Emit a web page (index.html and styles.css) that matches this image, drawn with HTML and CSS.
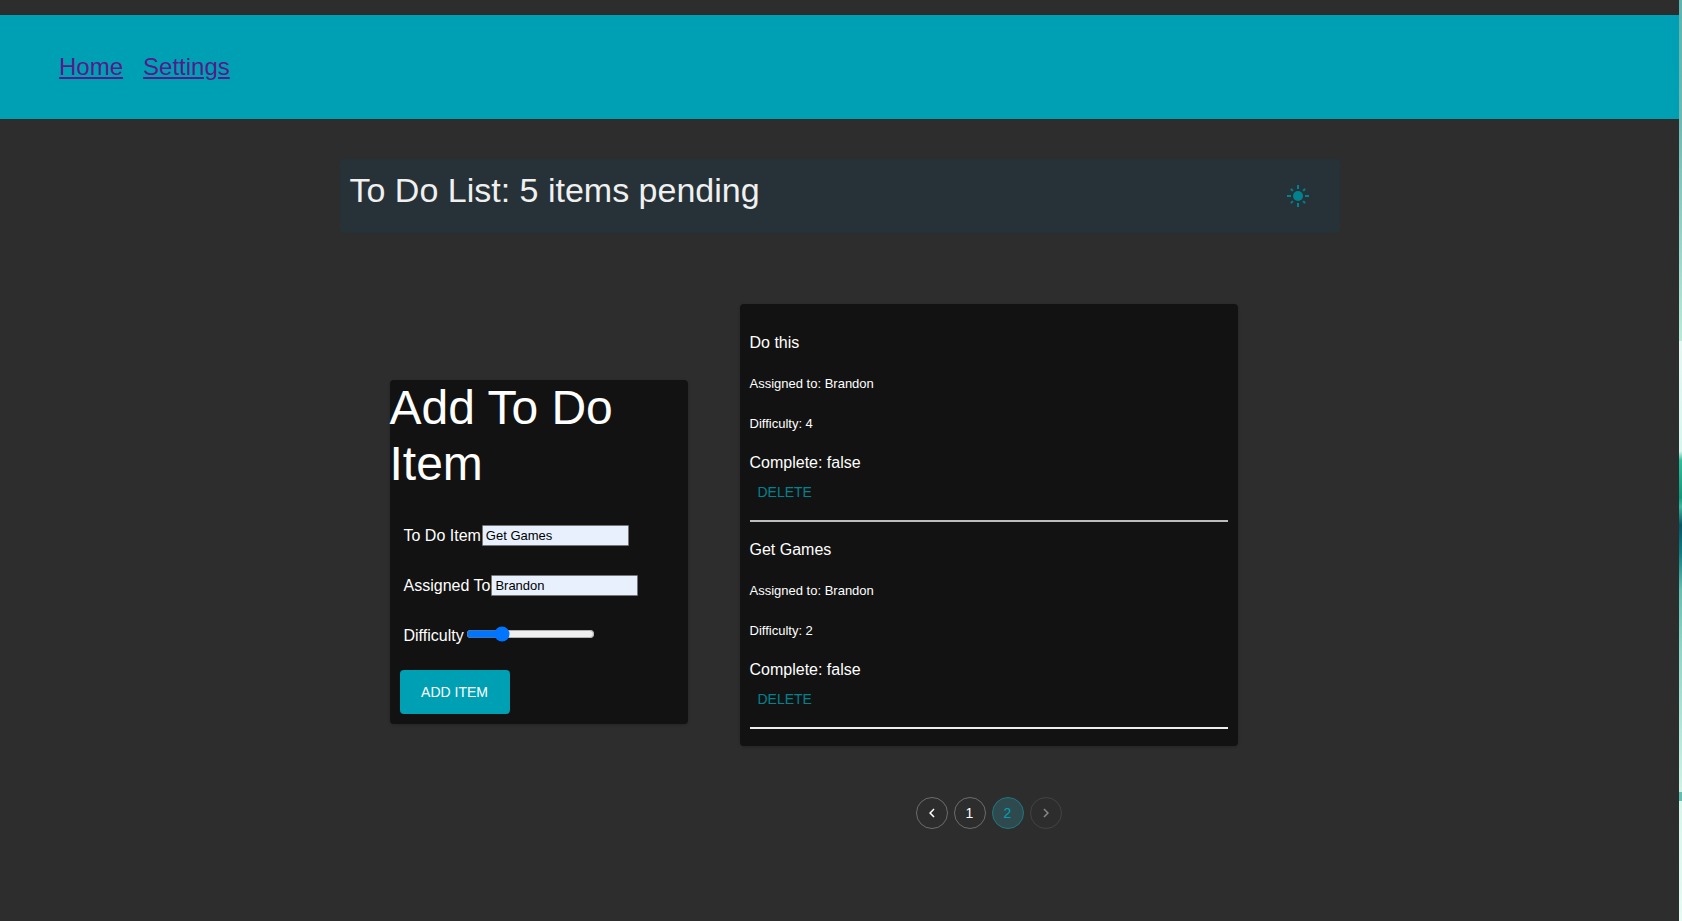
FILE: index.html
```html
<!DOCTYPE html>
<html lang="en">
<head>
<meta charset="utf-8">
<title>To Do List</title>
<link rel="stylesheet" href="styles.css">
</head>
<body>
<div class="app">
  <nav class="nav">
    <a class="nav-link" href="#home">Home</a>
    <a class="nav-link" href="#settings">Settings</a>
  </nav>
  <main class="page">
    <header class="banner">
      <h1 class="banner-title">To Do List: 5 items pending</h1>
      <button class="theme-toggle" type="button" aria-label="Toggle theme">
        <svg class="sun" viewBox="0 0 24 24" aria-hidden="true">
          <circle cx="12" cy="12" r="5"/>
          <path d="M11 1h2v4h-2zM11 19h2v4h-2zM1 11h4v2H1zM19 11h4v2h-4z"/>
          <path d="M4.2 5.6l1.4-1.4 2 2-1.4 1.4zM16.4 6.2l2-2 1.4 1.4-2 2zM4.2 18.4l2-2 1.4 1.4-2 2zM16.4 17.8l1.4-1.4 2 2-1.4 1.4z"/>
        </svg>
      </button>
    </header>
    <div class="columns">
      <form class="card form">
        <h2 class="form-title">Add To Do Item</h2>
        <div class="field"><label for="item">To Do Item</label><input class="text" id="item" type="text" value="Get Games"></div>
        <div class="field"><label for="who">Assigned To</label><input class="text" id="who" type="text" value="Brandon"></div>
        <div class="field"><label for="level">Difficulty</label><input class="range" id="level" type="range" min="1" max="5" value="2"></div>
        <button class="submit" type="button">ADD ITEM</button>
      </form>
      <section class="results">
        <div class="card list">
          <article class="todo">
            <p class="main-line">Do this</p>
            <p class="detail">Assigned to: Brandon</p>
            <p class="detail">Difficulty: 4</p>
            <p class="status">Complete: false</p>
            <button class="delete" type="button">DELETE</button>
          </article>
          <article class="todo">
            <p class="main-line">Get Games</p>
            <p class="detail">Assigned to: Brandon</p>
            <p class="detail">Difficulty: 2</p>
            <p class="status">Complete: false</p>
            <button class="delete" type="button">DELETE</button>
          </article>
        </div>
        <nav class="pages" aria-label="Pagination">
          <button class="page-btn" type="button" aria-label="Previous page"><svg class="chevron" viewBox="0 0 24 24"><path d="M15.41 7.41L14 6l-6 6 6 6 1.41-1.41L10.83 12z"/></svg></button>
          <button class="page-btn" type="button">1</button>
          <button class="page-btn current" type="button" aria-current="page">2</button>
          <button class="page-btn off" type="button" disabled aria-label="Next page"><svg class="chevron" viewBox="0 0 24 24"><path d="M10 6L8.59 7.41 13.17 12l-4.58 4.59L10 18l6-6z"/></svg></button>
        </nav>
      </section>
    </div>
  </main>
</div>
<div class="edge"></div>
</body>
</html>
```
FILE: styles.css
```css
* { box-sizing: border-box; }
body {
  margin: 0;
  min-height: 100vh;
  display: flex;
  background: #2d2d2d;
  color: #fff;
  font-family: "Liberation Sans", Arial, sans-serif;
  font-size: 16px;
}
h1, h2, p { margin: 0; font-weight: 400; }
button, input { font-family: inherit; }
button { padding: 0; border: 0; background: none; }
.app { flex: 1; padding-top: 15px; }
.edge {
  width: 3px;
  background: linear-gradient(#5bb5b1 0, #6cb9b3 13%, #b8ead8 37%, #e3f8f2 37%, #d5f7ee 49%, #2cbf9b 50%, #0e9a7c 54%, #39b9a0 55%, #045767 57%, #0b7f83 60%, #62bfb1 64%, #8cd5c5 70%, #cdf3e6 86%, #5fc0b2 86%, #5fc0b2 87%, #d5f6eb 87%, #e4fbf4 100%);
}
.nav {
  display: flex;
  gap: 20px;
  padding: 38px 59px;
  background: #00a0b4;
  font-size: 24px;
  line-height: 28px;
}
.nav-link { color: #551a8b; }
.page { width: 1000px; max-width: 100%; margin: 40px auto 0; }
.banner {
  display: flex;
  justify-content: space-between;
  height: 74px;
  padding: 10px;
  border-radius: 4px;
  background: #263238;
}
.banner-title { color: #f0f0f0; font-size: 34px; line-height: 42px; }
.theme-toggle { width: 64px; height: 54px; display: grid; place-items: center; }
.sun { width: 24px; height: 24px; fill: #00838f; }
.columns {
  display: grid;
  grid-template-columns: 298px 498px;
  gap: 52px;
  align-items: center;
  padding: 41px 50px 0;
}
.card { border-radius: 4px; background: #121212; box-shadow: 0 1px 3px rgba(0, 0, 0, .2); }
.form { padding-bottom: 10px; }
.form-title { margin-bottom: 19px; font-size: 48px; line-height: 56px; }
.field { display: flex; align-items: center; height: 50px; padding-left: 14px; }
.text {
  width: 147px;
  height: 21px;
  margin-left: 1px;
  padding: 1px 3px;
  border: 1px solid #767676;
  border-radius: 1px;
  background: #e8f0fe;
  color: #000;
  font-size: 13px;
}
.range { width: 129px; margin: 0 2px 4px; height: 16px; accent-color: #0075ff; }
.submit {
  display: block;
  width: 110px;
  height: 44px;
  margin: 9px 10px 0;
  border-radius: 4px;
  background: #00a0b4;
  color: #fff;
  font-size: 14px;
}
.results { padding-top: 30px; }
.list { padding: 11px 10px 17px; }
.todo { border-bottom: 2px solid #bdbdbd; padding: 16px 0 15px; }
.todo:last-child { border-color: #eee; }
.main-line, .status { line-height: 24px; }
.main-line { margin-bottom: 9px; }
.status { margin: 7px 0 4px; }
.detail { font-size: 13px; line-height: 40px; }
.delete { display: block; height: 26px; padding: 0 8px; color: #00838f; font-size: 14px; }
.pages { display: flex; justify-content: center; gap: 6px; margin-top: 51px; }
.page-btn {
  width: 32px;
  height: 32px;
  display: grid;
  place-items: center;
  border: 1px solid #6c6c6c;
  border-radius: 50%;
  color: #fff;
  font-size: 14px;
}
.current { border-color: #1f7681; background: #2f4a4f; color: #00a0b4; }
.off { border-color: #434343; color: #868686; }
.chevron { width: 18px; height: 18px; fill: currentColor; }
```
